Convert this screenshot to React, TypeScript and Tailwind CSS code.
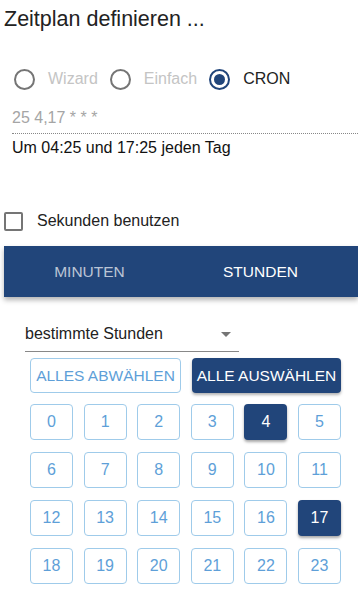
import { useState } from "react";

const HOURS = Array.from({ length: 24 }, (_, i) => i);

const Radio = ({ checked, label, disabled }: { checked?: boolean; label: string; disabled?: boolean }) => (
    <label className="flex items-center">
        <span
            className={`flex h-[21px] w-[21px] items-center justify-center rounded-full border-2 ${
                checked ? "border-[#21457a]" : "border-[#757575]"
            }`}
        >
            {checked && <span className="h-[11px] w-[11px] rounded-full bg-[#21457a]" />}
        </span>
        <span className={`ml-[13px] text-[16px] ${disabled ? "text-[#c4c4c4]" : "text-[#222]"}`}>{label}</span>
    </label>
);

export default function App() {
    const [tab, setTab] = useState(1);
    const [selected, setSelected] = useState<number[]>([4, 17]);

    const toggle = (h: number) =>
        setSelected((prev) => (prev.includes(h) ? prev.filter((x) => x !== h) : [...prev, h]));

    return (
        <div className="h-[596px] w-[358px] overflow-hidden bg-white font-['Liberation_Sans',Arial,sans-serif]">
            <h2 className="pl-1 pt-[5px] text-[21.5px] leading-[28px] text-[#222]">Zeitplan definieren ...</h2>

            <div className="mt-[34px] flex items-center gap-[12px] pl-[14px]">
                <Radio label="Wizard" disabled />
                <Radio label="Einfach" disabled />
                <Radio label="CRON" checked />
            </div>

            <div className="ml-[12px] mt-[18px]">
                <div className="border-b border-dotted border-[#888] pb-[6px] text-[16px] leading-[18px] text-[#a5a5a5]">
                    25 4,17 * * *
                </div>
                <div className="mt-[4px] text-[16px] leading-[20px] text-[#111]">Um 04:25 und 17:25 jeden Tag</div>
            </div>

            <label className="ml-1 mt-[51px] flex items-center">
                <span className="h-[19px] w-[19px] rounded-[2px] border-2 border-[#757575]" />
                <span className="ml-[14px] text-[16px] text-[#222]">Sekunden benutzen</span>
            </label>

            <div className="ml-1 mt-[13px] flex h-[51px] bg-[#21457a] shadow-[0_3px_5px_rgba(0,0,0,0.3)]">
                {["MINUTEN", "STUNDEN"].map((t, i) => (
                    <button
                        key={t}
                        onClick={() => setTab(i)}
                        className={`w-[171px] text-[15.5px] ${tab === i ? "text-white" : "text-white/70"}`}
                    >
                        {t}
                    </button>
                ))}
            </div>

            <div className="ml-[25px] mt-[27px] flex w-[214px] items-center justify-between border-b border-[#888] pb-[7px]">
                <span className="text-[16px] leading-[20px] text-[#222]">bestimmte Stunden</span>
                <span className="mr-[8px] h-0 w-0 border-l-[5px] border-r-[5px] border-t-[5px] border-l-transparent border-r-transparent border-t-[#757575]" />
            </div>

            <div className="ml-[30px] mt-[6px] flex w-[311px] justify-between">
                <button
                    onClick={() => setSelected([])}
                    className="h-[35px] w-[151px] rounded-[4px] border border-[#9fcbea] text-[15.5px] text-[#5e9fd8]"
                >
                    ALLES ABWÄHLEN
                </button>
                <button
                    onClick={() => setSelected(HOURS)}
                    className="h-[35px] w-[149px] rounded-[4px] bg-[#21457a] text-[15.5px] text-white shadow-[0_2px_3px_rgba(0,0,0,0.3)]"
                >
                    ALLE AUSWÄHLEN
                </button>
            </div>

            <div className="ml-[30px] mt-[11px] grid w-[311px] grid-cols-6 gap-x-[10.6px] gap-y-[12px]">
                {HOURS.map((h) =>
                    selected.includes(h) ? (
                        <button
                            key={h}
                            onClick={() => toggle(h)}
                            className="h-[36px] rounded-[4px] bg-[#21457a] text-[16px] text-white shadow-[0_2px_3px_rgba(0,0,0,0.35)]"
                        >
                            {h}
                        </button>
                    ) : (
                        <button
                            key={h}
                            onClick={() => toggle(h)}
                            className="h-[36px] rounded-[4px] border border-[#9fcbea] text-[16px] text-[#5e9fd8]"
                        >
                            {h}
                        </button>
                    )
                )}
            </div>
        </div>
    );
}
